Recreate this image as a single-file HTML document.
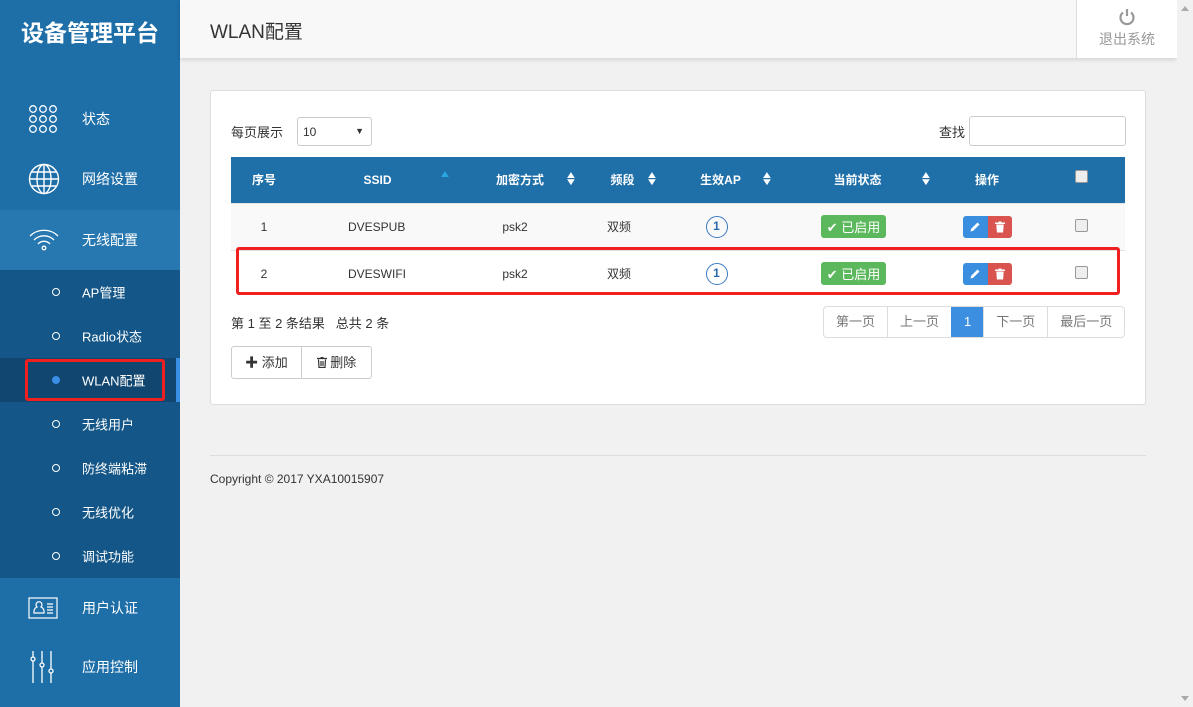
<!DOCTYPE html>
<html><head><meta charset="utf-8"><style>
*{margin:0;padding:0;box-sizing:border-box}
body{width:1193px;height:707px;overflow:hidden;background:#f1f1f1;font-family:"Liberation Sans","Noto Sans CJK SC",sans-serif;font-size:13px;color:#333;position:relative}
.side{position:absolute;left:0;top:0;width:180px;height:707px;background:#1e6ea8;color:#fff}
.logo{position:absolute;left:0;top:14px;width:180px;text-align:center;font-size:23px;font-weight:bold}
.item{position:absolute;left:0;width:180px;height:60px;font-size:14px}
.item span{position:absolute;left:82px;top:50%;transform:translateY(-50%)}
.item svg{position:absolute;left:28px;top:50%;transform:translateY(-50%)}
.sub{position:absolute;left:0;top:270px;width:180px;height:308px;background:#135687}
.si{position:absolute;left:0;width:180px;height:44px;font-size:13px}
.si span{position:absolute;left:82px;top:50%;transform:translateY(-50%)}
.si i{position:absolute;left:52px;top:18px;width:8px;height:8px;border:1.5px solid #fff;border-radius:50%}
.top{position:absolute;left:180px;top:0;width:997px;height:58px;background:#f8f8f8;box-shadow:0 2px 4px rgba(0,0,0,.12)}
.top h1{position:absolute;left:30px;top:17px;font-size:19px;font-weight:normal;color:#333}
.exit{position:absolute;right:0;top:0;width:101px;height:58px;background:#fff;border-left:1px solid #ddd;text-align:center;color:#999;font-size:14px}
.panel{position:absolute;left:210px;top:90px;width:936px;height:315px;background:#fff;border:1px solid #ddd;border-radius:3px}
table{position:absolute;left:20px;top:66px;width:894px;border-collapse:collapse;font-size:12px;table-layout:fixed}
th{background:#1f6fa9;color:#fff;height:46px;font-weight:bold;position:relative}
td{height:47px;text-align:center;border-top:1px solid #e3e3e3}
.sort{position:absolute;top:15px;font-size:10px;line-height:7px;color:#fff;transform:scaleX(1.3)}
.circ{display:inline-block;width:22px;height:22px;border:1.5px solid #3a7ac0;border-radius:50%;color:#2a6aa8;font-weight:bold;line-height:19px;font-size:12px}
.on{display:inline-block;background:#5cb85c;color:#fff;border-radius:3px;padding:2px 6px;font-size:13px}
.ed{display:inline-block;width:25px;height:22px;background:#3a8ee0;border-radius:3px 0 0 3px;vertical-align:middle;position:relative}
.dl{display:inline-block;width:24px;height:22px;background:#d9534f;border-radius:0 3px 3px 0;vertical-align:middle;position:relative}
.ed svg,.dl svg{position:absolute;left:50%;top:50%;transform:translate(-50%,-50%)}
.cb{display:inline-block;width:13px;height:13px;border:1px solid #999;border-radius:2px;background:#eee}
.pg{position:absolute;left:612px;top:215px;height:32px;display:flex;border:1px solid #ddd;border-radius:4px;overflow:hidden}
.pg div{padding:0 12px;line-height:30px;color:#777;border-left:1px solid #ddd;font-size:13px}
.pg div:first-child{border-left:0}
</style></head><body>
<div class="side">
 <div class="logo">设备管理平台</div>
 <div class="item" style="top:89px"><svg width="30" height="30" viewBox="0 0 30 30" fill="none" stroke="#fff" stroke-width="1.3"><circle cx="5" cy="5" r="3.3"/><circle cx="15" cy="5" r="3.3"/><circle cx="25" cy="5" r="3.3"/><circle cx="5" cy="15" r="3.3"/><circle cx="15" cy="15" r="3.3"/><circle cx="25" cy="15" r="3.3"/><circle cx="5" cy="25" r="3.3"/><circle cx="15" cy="25" r="3.3"/><circle cx="25" cy="25" r="3.3"/></svg><span>状态</span></div>
 <div class="item" style="top:149px"><svg width="32" height="32" viewBox="0 0 32 32" fill="none" stroke="#fff" stroke-width="1.4"><circle cx="16" cy="16" r="14.5"/><ellipse cx="16" cy="16" rx="7" ry="14.5"/><line x1="16" y1="1.5" x2="16" y2="30.5"/><line x1="1.5" y1="16" x2="30.5" y2="16"/><path d="M4 9h24M4 23h24"/></svg><span>网络设置</span></div>
 <div class="item" style="top:210px;background:#2777b0"><svg width="32" height="22" viewBox="0 0 32 22" fill="none" stroke="#fff" stroke-width="1.3"><path d="M2 7a20 20 0 0 1 28 0M6 11a14 14 0 0 1 20 0M10 15a8 8 0 0 1 12 0"/><circle cx="16" cy="19" r="1.8"/></svg><span>无线配置</span></div>
 <div class="sub">
  <div class="si" style="top:0"><i></i><span>AP管理</span></div>
  <div class="si" style="top:44px"><i></i><span>Radio状态</span></div>
  <div class="si" style="top:88px;background:#114670"><i style="background:#3b8ee6;border-color:#3b8ee6"></i><span>WLAN配置</span><b style="position:absolute;right:0;top:0;width:4px;height:44px;background:#3b8ee6"></b><b style="position:absolute;left:25px;top:1px;width:140px;height:42px;border:3px solid #f02020;border-radius:3px"></b></div>
  <div class="si" style="top:132px"><i></i><span>无线用户</span></div>
  <div class="si" style="top:176px"><i></i><span>防终端粘滞</span></div>
  <div class="si" style="top:220px"><i></i><span>无线优化</span></div>
  <div class="si" style="top:264px"><i></i><span>调试功能</span></div>
 </div>
 <div class="item" style="top:578px"><svg width="30" height="22" viewBox="0 0 30 22" fill="none" stroke="#fff" stroke-width="1.2"><rect x="1" y="1" width="28" height="20"/><path d="M6 16v-2a5 5 0 0 1 3-4a3 3 0 1 1 4 0a5 5 0 0 1 3 4v2zM19 7h6M19 10h6M19 13h6M19 16h6"/></svg><span>用户认证</span></div>
 <div class="item" style="top:637px"><svg width="28" height="34" viewBox="0 0 28 34" fill="none" stroke="#fff" stroke-width="1.3"><path d="M5 1v32M14 1v32M23 1v32"/><circle cx="5" cy="9" r="2" fill="#1e6ea8"/><circle cx="14" cy="15" r="2" fill="#1e6ea8"/><circle cx="23" cy="21" r="2" fill="#1e6ea8"/></svg><span>应用控制</span></div>
</div>
<div class="top"><h1>WLAN配置</h1>
 <div class="exit"><svg width="18" height="18" viewBox="0 0 18 18" style="margin-top:8px" fill="none" stroke="#999" stroke-width="2.2"><path d="M5 4.5a6.5 6.5 0 1 0 8 0"/><path d="M9 1v7"/></svg><div>退出系统</div></div>
</div>
<div style="position:absolute;left:1177px;top:0;width:16px;height:707px;background:#f1f1f1"><div style="position:absolute;left:4px;top:6px;border:4px solid transparent;border-bottom:5px solid #aaa;border-top:0"></div><div style="position:absolute;left:4px;bottom:6px;border:4px solid transparent;border-top:5px solid #aaa;border-bottom:0"></div></div>
<div class="panel">
 <div style="position:absolute;left:20px;top:31px">每页展示</div>
 <div style="position:absolute;left:86px;top:26px;width:75px;height:29px;border:1px solid #ccc;border-radius:3px;font-size:12px;padding:7px 5px">10<span style="position:absolute;right:7px;top:8px;font-size:9px">▼</span></div>
 <div style="position:absolute;left:728px;top:31px">查找</div>
 <div style="position:absolute;left:758px;top:25px;width:157px;height:30px;border:1px solid #ccc;border-radius:3px"></div>
 <table>
  <colgroup><col style="width:66px"><col style="width:161px"><col style="width:124px"><col style="width:81px"><col style="width:115px"><col style="width:159px"><col style="width:100px"><col style="width:88px"></colgroup>
  <tr><th>序号</th><th>SSID<span class="sort" style="right:8px;color:#29a8e0;top:14px">▲</span></th><th>加密方式<span class="sort" style="right:6px">▲<br>▼</span></th><th>频段<span class="sort" style="right:6px">▲<br>▼</span></th><th>生效AP<span class="sort" style="right:6px">▲<br>▼</span></th><th>当前状态<span class="sort" style="right:6px">▲<br>▼</span></th><th>操作</th><th><span class="cb" style="background:#eee;margin-top:-8px;vertical-align:middle"></span></th></tr>
  <tr style="background:#f9f9f9"><td>1</td><td style="text-align:left;padding-left:51px">DVESPUB</td><td style="padding-right:10px">psk2</td><td style="text-align:left;padding-left:25px">双频</td><td style="padding-right:8px"><span class="circ">1</span></td><td style="padding-right:8px"><span class="on">✔ 已启用</span></td><td><span class="ed"><svg width="11" height="11" viewBox="0 0 11 11"><path d="M1 10l.6-2.6L8 1l2 2-6.4 6.4z" fill="#fff"/></svg></span><span class="dl"><svg width="10" height="11" viewBox="0 0 10 11" fill="#fff"><rect x="0" y="1" width="10" height="1.5"/><rect x="3.5" y="0" width="3" height="1.5"/><path d="M1.3 3h7.4l-.6 8H1.9z"/></svg></span></td><td><span class="cb"></span></td></tr>
  <tr><td>2</td><td style="text-align:left;padding-left:51px">DVESWIFI</td><td style="padding-right:10px">psk2</td><td style="text-align:left;padding-left:25px">双频</td><td style="padding-right:8px"><span class="circ">1</span></td><td style="padding-right:8px"><span class="on">✔ 已启用</span></td><td><span class="ed"><svg width="11" height="11" viewBox="0 0 11 11"><path d="M1 10l.6-2.6L8 1l2 2-6.4 6.4z" fill="#fff"/></svg></span><span class="dl"><svg width="10" height="11" viewBox="0 0 10 11" fill="#fff"><rect x="0" y="1" width="10" height="1.5"/><rect x="3.5" y="0" width="3" height="1.5"/><path d="M1.3 3h7.4l-.6 8H1.9z"/></svg></span></td><td><span class="cb"></span></td></tr>
 </table>
 <div style="position:absolute;left:25px;top:156px;width:884px;height:48px;border:3px solid #f02020;border-radius:3px"></div>
 <div style="position:absolute;left:20px;top:222px">第 1 至 2 条结果 &nbsp; 总共 2 条</div>
 <div class="pg"><div>第一页</div><div>上一页</div><div style="background:#3b8ee0;color:#fff;border-color:#3b8ee0">1</div><div>下一页</div><div>最后一页</div></div>
 <div style="position:absolute;left:20px;top:255px;width:141px;height:33px;border:1px solid #ccc;border-radius:3px;display:flex;line-height:31px"><div style="width:70px;text-align:center;border-right:1px solid #ccc"><b>✚</b> 添加</div><div style="flex:1;text-align:center"><svg width="10" height="11" viewBox="0 0 10 11" fill="none" stroke="#333" stroke-width="1.2" style="vertical-align:-1px"><path d="M0 1.5h10M3.5.5h3M1.5 2.5l.5 8h6l.5-8M4 4v5M6 4v5"/></svg> 删除</div></div>
</div>
<div style="position:absolute;left:210px;top:455px;width:936px;border-top:1px solid #ddd"></div>
<div style="position:absolute;left:210px;top:472px;font-size:12px">Copyright © 2017 YXA10015907</div>
</body></html>
